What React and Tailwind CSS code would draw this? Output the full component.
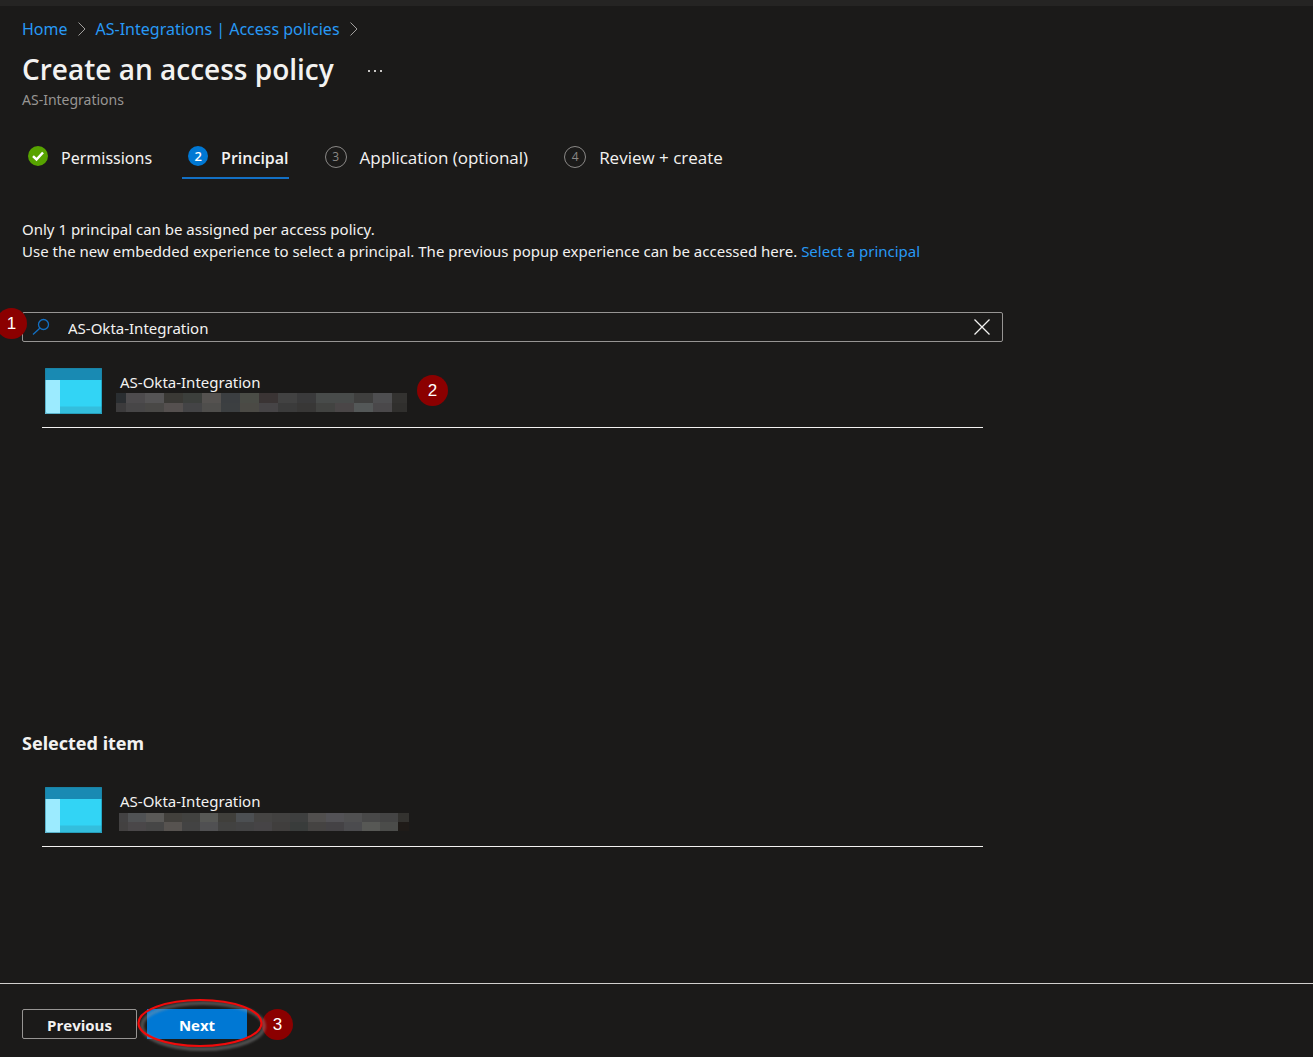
const MOSAIC_A = [
  ["#2a2e31", "#4d4b4d", "#555455", "#3a3935", "#3c3f3c", "#555250", "#3b3e41", "#4a4c46", "#3a3434", "#424242", "#3a3a3b", "#484b4a", "#484b4a", "#3f3f3e", "#4e4e50", "#333230"],
  ["#3c3b3c", "#474647", "#494846", "#55504f", "#444446", "#4f4e4c", "#3c3f41", "#4b4a45", "#464446", "#3b3b3b", "#383736", "#424341", "#4a4647", "#545858", "#4a484a", "#302f2d"],
];
const MOSAIC_B = [
  ["#434243", "#505254", "#5a5957", "#42403c", "#424240", "#575855", "#403f3b", "#4c4f52", "#454443", "#424140", "#3e3f3f", "#514f4e", "#535256", "#505051", "#484848", "#444444", "#33322f"],
  ["#434141", "#4a4749", "#464646", "#575350", "#434343", "#505052", "#424241", "#434344", "#464446", "#403e3d", "#393c3b", "#454342", "#444245", "#4b4b4e", "#575855", "#4b4c4a", "#1f1b18"],
];

function Mosaic({ rows, className }) {
  return (
    <div className={className} aria-hidden="true">
      {rows.flatMap((row, r) =>
        row.map((color, c) => <span key={`${r}-${c}`} style={{ backgroundColor: color }} />)
      )}
    </div>
  );
}

function AppIcon() {
  return (
    <svg className="h-[46px] w-[57px] shrink-0" viewBox="0 0 57 46" aria-hidden="true">
      <rect width="57" height="46" rx="1.5" fill="#32d4f5" />
      <path d="M15 38.500H57V44.500Q57 46 55.500 46H15Z" fill="#33bedd" />
      <path d="M0 12H15V46H1.500Q0 46 0 44.500Z" fill="#9cebff" />
      <path d="M1.500 0H55.500Q57 0 57 1.500V12H0V1.500Q0 0 1.500 0Z" fill="#198ab3" />
      <rect x="0.500" y="0.500" width="56" height="45" rx="1.500" fill="none" stroke="#1a7c98" strokeOpacity="0.500" />
    </svg>
  );
}

function Badge({ children, className }) {
  return (
    <span
      className={`flex size-[31px] items-center justify-center rounded-full bg-[#8b0000] font-['Liberation_Sans',sans-serif] text-[17px] leading-none text-white ${className}`}
    >
      {children}
    </span>
  );
}

function Crumb() {
  return (
    <svg className="h-[14px] w-[8px]" viewBox="0 0 8 14" fill="none" stroke="#a19f9d" aria-hidden="true">
      <path d="M0.500 0.500L7 7L0.500 13.500" />
    </svg>
  );
}

const STEP_STYLE = {
  done: "border-transparent font-['Noto_Sans',sans-serif] text-[16px] gap-[13px]",
  current: "border-[#1370c4] font-['Open_Sans',sans-serif] text-[16px] font-semibold gap-[13px]",
  todo: "border-transparent font-['Open_Sans',sans-serif] text-[17px] gap-[13px]",
};

function Step({ number, label, state }) {
  return (
    <button
      type="button"
      aria-current={state === "current" ? "step" : undefined}
      className={`flex h-[33px] items-start border-b-2 pl-[6px] leading-6 whitespace-nowrap text-[#f3f2f1] ${STEP_STYLE[state]}`}
    >
      {state === "done" && (
        <svg className="size-5" viewBox="0 0 20 20" aria-hidden="true">
          <circle cx="10" cy="10" r="10" fill="#57a300" />
          <path d="M5 10.200L8.500 13.500L15 6.500" fill="none" stroke="#fff" strokeWidth="2.500" />
        </svg>
      )}
      {state === "current" && (
        <span className="flex size-5 items-center justify-center rounded-full bg-[#0078d4] text-[13px] leading-none text-white">
          {number}
        </span>
      )}
      {state === "todo" && (
        <span className="flex size-[22px] items-center justify-center rounded-full border border-[#8a8886] text-[12px] leading-none text-[#8a8886]">
          {number}
        </span>
      )}
      <span>{label}</span>
    </button>
  );
}

function Principal({ children }) {
  return (
    <div className="mx-5 flex h-[60px] items-start border-b border-[#f3f2f1] pl-[3px]">
      <AppIcon />
      {children}
    </div>
  );
}

export default function App() {
  return (
    <div className="flex min-h-screen flex-col border-t-[6px] border-[#252423] bg-[#1b1a19] font-['Noto_Sans',sans-serif] text-[15px] leading-[22px] text-[#f3f2f1]">
      <main className="flex-1 px-[22px] pt-3">
        <nav aria-label="Breadcrumb" className="flex items-center gap-[10px] text-[16px] text-[#2899f5]">
          <a href="#home">Home</a>
          <Crumb />
          <a href="#policies">AS-Integrations | Access policies</a>
          <Crumb />
        </nav>
        <div className="mt-[9px] flex items-center gap-[34px]">
          <h1 className="font-['Open_Sans',sans-serif] text-[28px] leading-10 font-semibold">Create an access policy</h1>
          <button type="button" aria-label="More" className="mt-1 flex gap-1">
            <span className="size-[2px] bg-[#c8c6c4]" />
            <span className="size-[2px] bg-[#c8c6c4]" />
            <span className="size-[2px] bg-[#c8c6c4]" />
          </button>
        </div>
        <p className="text-[14px] text-[#979593]">AS-Integrations</p>

        <div className="mt-[35px] flex gap-[30px]">
          <Step number="1" label="Permissions" state="done" />
          <Step number="2" label="Principal" state="current" />
          <Step number="3" label="Application (optional)" state="todo" />
          <Step number="4" label="Review + create" state="todo" />
        </div>

        <div className="mt-[39px]">
          <p>Only 1 principal can be assigned per access policy.</p>
          <p>
            Use the new embedded experience to select a principal. The previous popup experience can be accessed here.{" "}
            <a href="#select" className="text-[#2899f5]">Select a principal</a>
          </p>
        </div>

        <div className="max-w-[981px]">
          <div className="relative mt-[50px] flex h-[30px] items-center rounded-[2px] border border-[#979593]">
            <svg className="ml-[9px] size-[18px]" viewBox="0 0 18 18" fill="none" stroke="#1370c4" strokeWidth="1.300" aria-hidden="true">
              <circle cx="11.500" cy="6.500" r="5" />
              <path d="M7.800 10.200L1 16.500" />
            </svg>
            <input
              type="text"
              aria-label="Search principals"
              defaultValue="AS-Okta-Integration"
              className="ml-[18px] min-w-0 flex-1 bg-transparent pt-px outline-none"
            />
            <button type="button" aria-label="Clear search" className="mr-3">
              <svg className="size-4" viewBox="0 0 16 16" fill="none" stroke="#f3f2f1" strokeWidth="1.300" aria-hidden="true">
                <path d="M0.500 0.500L15.500 15.500M15.500 0.500L0.500 15.500" />
              </svg>
            </button>
            <Badge className="absolute top-[-5px] left-[-27px]">1</Badge>
          </div>

          <section className="h-[389px] pt-[26px]" aria-label="Results">
            <Principal>
              <div className="ml-[14px]">
                <p className="pt-[3px] pl-1">AS-Okta-Integration</p>
                <Mosaic rows={MOSAIC_A} className="grid grid-cols-[10px_repeat(14,19px)_15px] grid-rows-[10px_9px]" />
              </div>
              <Badge className="mt-[7px] ml-[10px]">2</Badge>
            </Principal>
          </section>

          <section>
            <h2 className="text-[18px] leading-6 font-bold">Selected item</h2>
            <div className="mt-8">
              <Principal>
                <div className="ml-[17px]">
                  <p className="pt-[3px] pb-px pl-px">AS-Okta-Integration</p>
                  <Mosaic rows={MOSAIC_B} className="grid grid-cols-[9px_repeat(15,18px)_11px] grid-rows-[9px_9px]" />
                </div>
              </Principal>
            </div>
          </section>
        </div>
      </main>

      <footer className="flex h-[74px] items-start border-t border-[#d2d0ce] px-[22px] pt-[25px] font-['Open_Sans',sans-serif] font-bold">
        <button type="button" className="h-[30px] w-[115px] rounded-[2px] border border-[#979593] pt-px">Previous</button>
        <div className="relative ml-[10px]">
          <button type="button" className="h-[30px] w-[100px] bg-[#0078d4] pt-px text-white">Next</button>
          <svg className="pointer-events-none absolute top-[-12px] left-[-12px] h-[60px] w-[138px]" viewBox="0 0 138 60" fill="none" aria-hidden="true">
            <defs>
              <filter id="soft" x="-10%" y="-20%" width="120%" height="140%">
                <feGaussianBlur stdDeviation="1.2" />
              </filter>
            </defs>
            <ellipse cx="68" cy="29" rx="61" ry="23" stroke="#9a9a9a" strokeOpacity="0.400" strokeWidth="4" filter="url(#soft)" />
            <ellipse cx="65" cy="26" rx="61.500" ry="23" stroke="#f00b0b" strokeWidth="2.200" />
          </svg>
        </div>
        <Badge className="ml-[15px] font-normal">3</Badge>
      </footer>
    </div>
  );
}
